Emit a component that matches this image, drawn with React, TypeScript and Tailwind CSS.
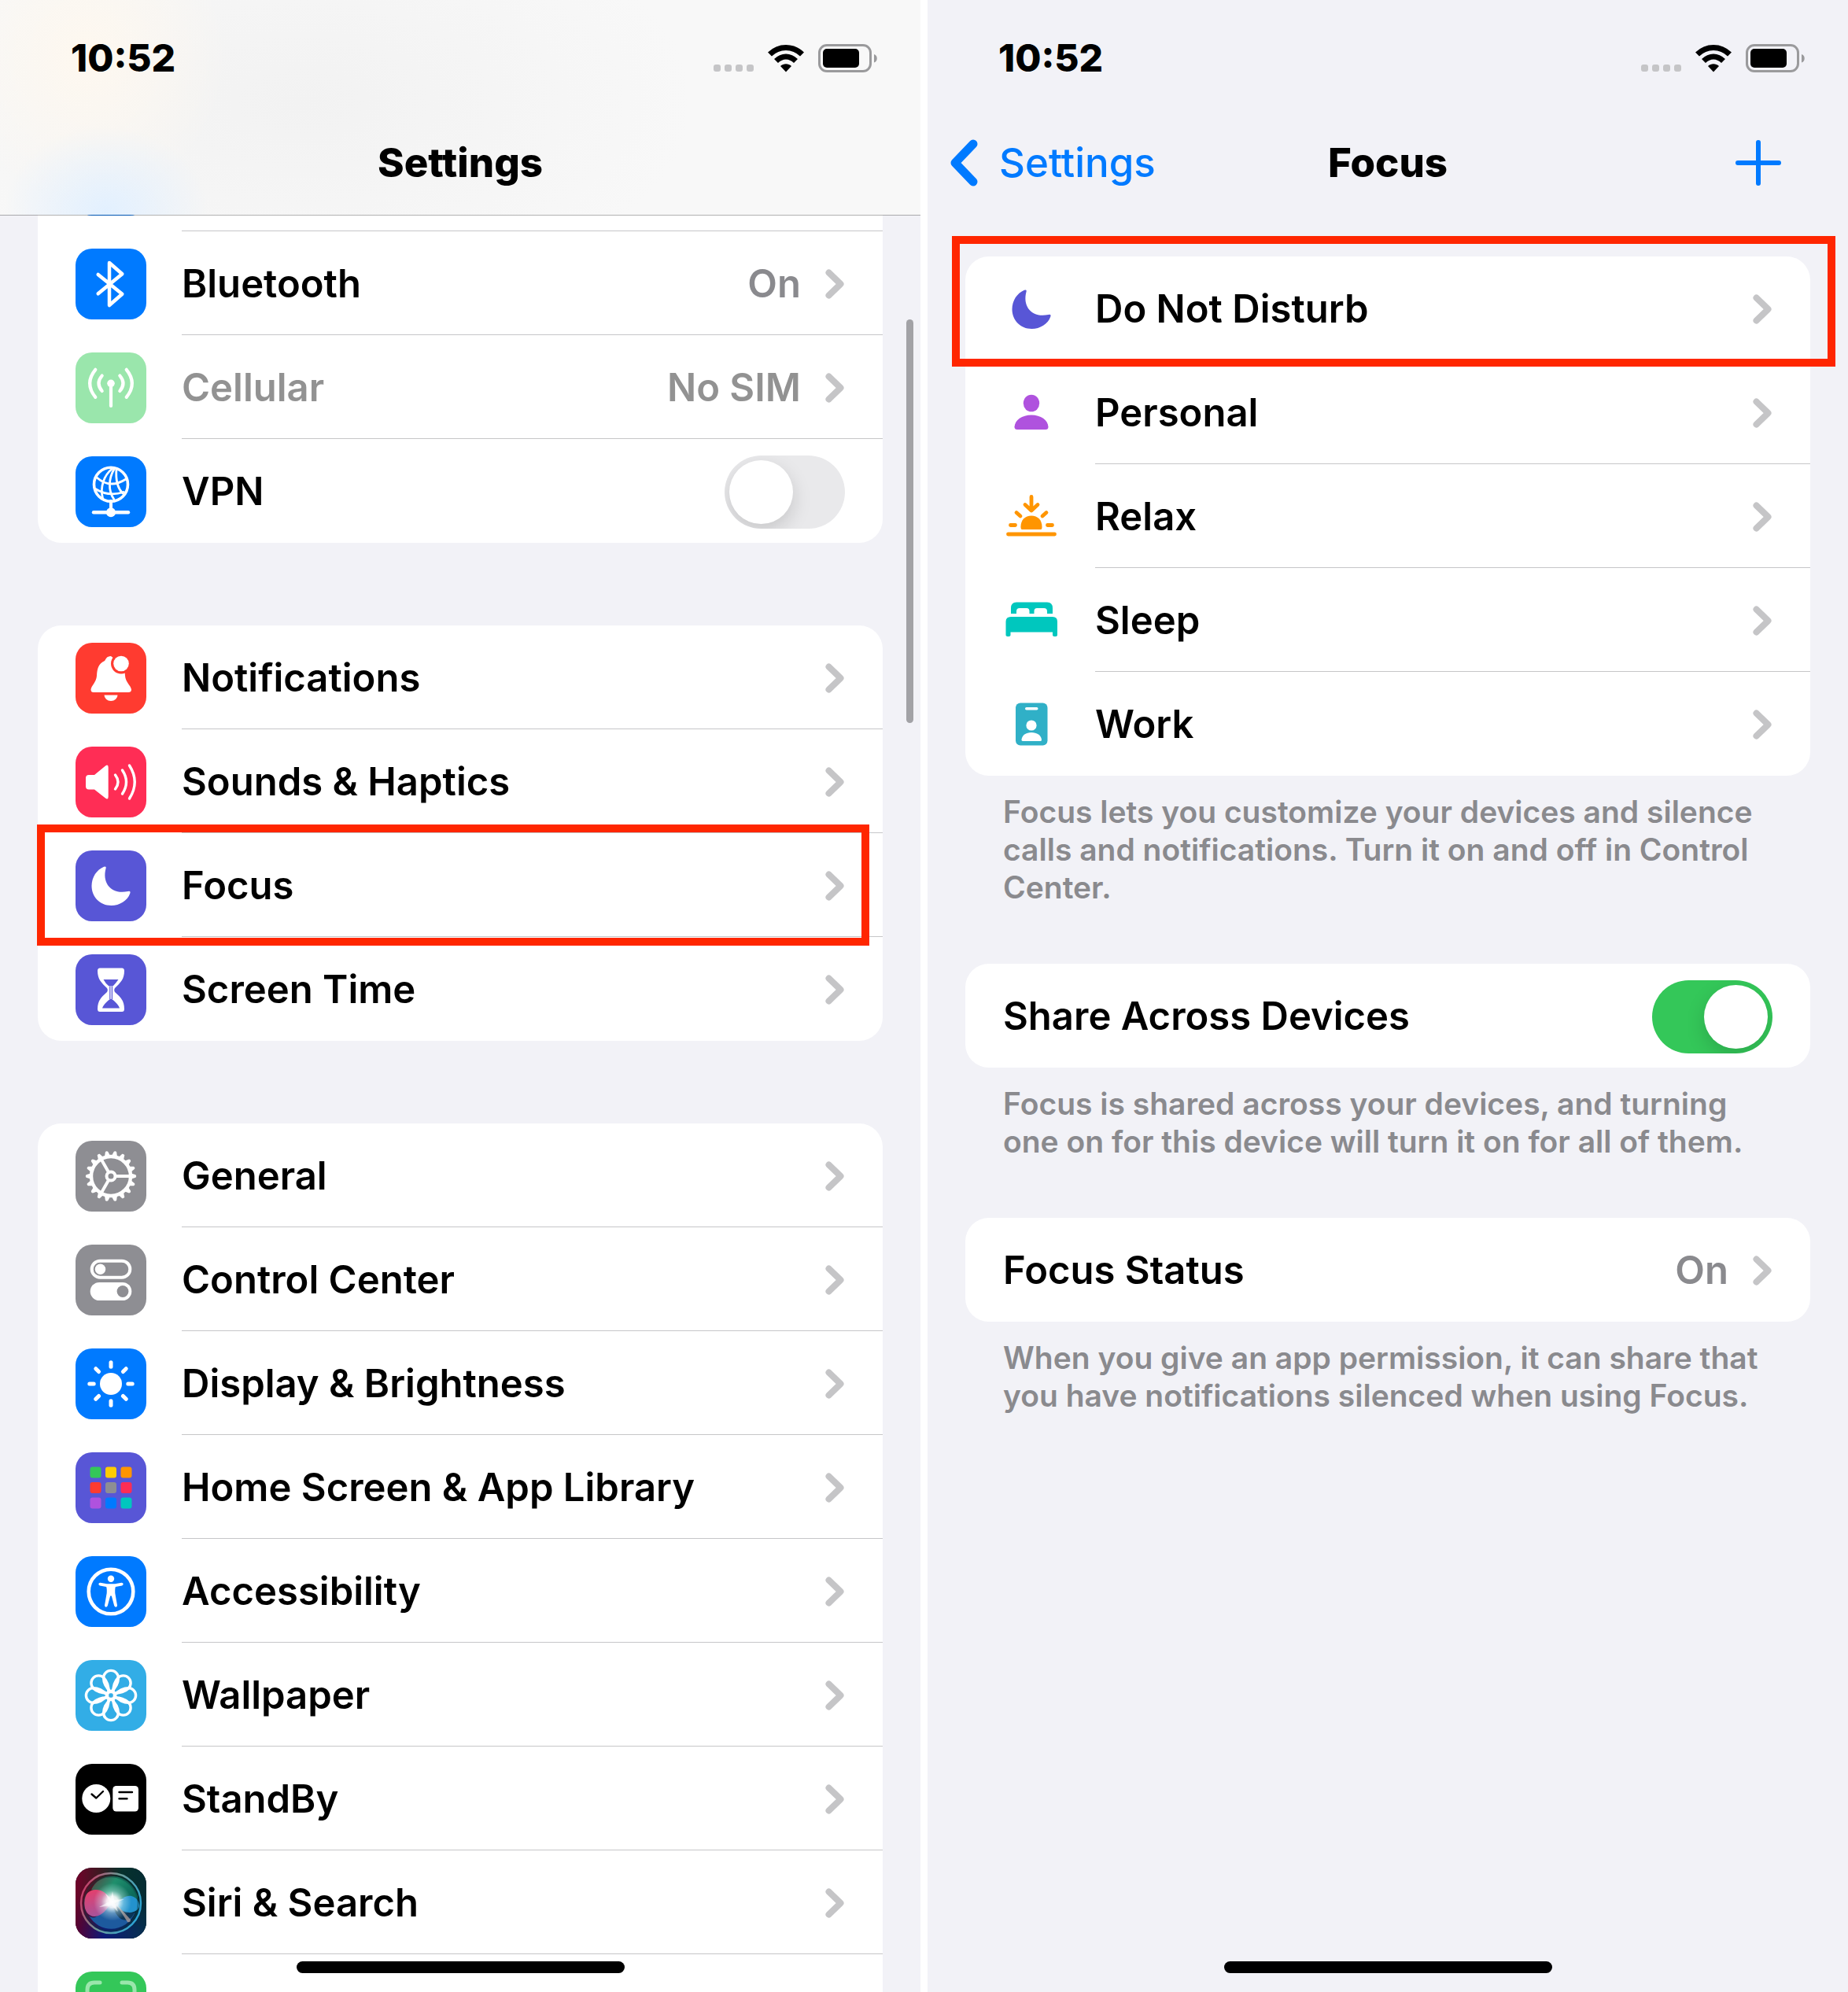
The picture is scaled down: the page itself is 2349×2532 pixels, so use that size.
import React from 'react';
import clsx from 'clsx';

/* ---------- Icons (tiles are drawn on a 90 x 90 grid) ---------- */

interface TileProps {
    className: string;
    children?: React.ReactNode;
}

const Tile: React.FC<TileProps> = ({ className, children }) => (
    <svg viewBox="0 0 90 90" aria-hidden="true" className={clsx('size-[90px] shrink-0 rounded-[21px]', className)}>
        {children}
    </svg>
);

const BluetoothIcon = () => (
    <Tile className="bg-[#007aff]">
        <path
            d="M28.7 33 59.3 57.8 43 72V18L59.3 32.2 28.7 57.3"
            fill="none"
            stroke="#fff"
            strokeWidth="4.5"
            strokeLinecap="round"
            strokeLinejoin="round"
        />
    </Tile>
);

const CellularIcon = () => (
    <Tile className="bg-[#9ae6ac]">
        <circle cx="45" cy="39.3" r="4.8" fill="#fff" />
        <g fill="none" stroke="#fff" strokeWidth="4.2" strokeLinecap="round">
            <path d="M45 40v28" />
            <path d="M56.3 29.5Q64.7 39.3 56.3 49" />
            <path d="M33.7 29.5Q25.3 39.3 33.7 49" />
            <path d="M64.7 21.8Q79 39.3 64.7 56.8" />
            <path d="M25.3 21.8Q11 39.3 25.3 56.8" />
        </g>
    </Tile>
);

const VpnIcon = () => (
    <Tile className="bg-[#007aff]">
        <g fill="none" stroke="#fff" strokeLinecap="round">
            <circle cx="45" cy="35.8" r="21.5" strokeWidth="3.6" />
            <g strokeWidth="2.8">
                <path d="M47 15.5C36 24 31 39 34.5 53" />
                <path d="M49.5 15.5C42 28 41 43 49 55" />
                <path d="M52 16C51 28 52 39 60 47" />
                <path d="M27 27Q44 42 64 29" />
                <path d="M24.5 41Q42 52 61 45.5" />
            </g>
            <path d="M45 57v10" strokeWidth="4" />
            <path d="M23 71.2h44" strokeWidth="4.4" />
        </g>
        <circle cx="45" cy="71.2" r="6" fill="#fff" />
    </Tile>
);

const NotificationsIcon = () => (
    <Tile className="bg-[#ff3b30]">
        <path
            fill="#fff"
            d="M45 17C39.5 17 38.5 21 37 23 29 26.5 27.5 33 27 42 26.5 50 20 54.5 19.5 59.5Q19.5 63 23 63H67Q71 63 71 59.5C70.5 54.5 63.5 50 63 42L62 30Z"
        />
        <path fill="#fff" d="M36.5 66.5H53.5A8.5 7.5 0 0 1 36.5 66.5Z" />
        <circle cx="58" cy="26.5" r="13" fill="#ff3b30" />
        <circle cx="58" cy="26.5" r="9.8" fill="#fff" />
    </Tile>
);

const SoundsIcon = () => (
    <Tile className="bg-[#ff2d55]">
        <path fill="#fff" d="M17 36H24L38 24.5Q41.7 22 41.7 26.5V63.5Q41.7 68 38 65.5L24 54.5H17Q13 54.5 13 50.5V40Q13 36 17 36Z" />
        <g fill="none" stroke="#fff" strokeWidth="3.4" strokeLinecap="round">
            <path d="M50.5 36Q57.5 45 50.5 54" />
            <path d="M59.5 30Q69.5 45 59.5 60" />
            <path d="M68.5 24Q82 45 68.5 66" />
        </g>
    </Tile>
);

const MOON_PATH =
    'M36 20.8Q39.5 19.5 38.5 23C33.5 42 46 56.5 66.5 52Q70.5 51 69.3 54.5C66 64 56 70 45.5 70 31 70 20.5 59 20.5 45 20.5 34 27 24.5 36 20.8Z';

const FocusIcon = () => (
    <Tile className="bg-[#5856d6]">
        <path fill="#fff" d={MOON_PATH} />
    </Tile>
);

const ScreenTimeIcon = () => (
    <Tile className="bg-[#5856d6]">
        <path
            fill="#fff"
            d="M31 17.5H59Q62 17.5 62 21C62 32 57 36 50 43Q48.5 45.5 50 48C57 54 62 59 62 69.5Q62 73 59 73H31Q28 73 28 69.5C28 59 33 54 40 48Q41.5 45.5 40 43C33 36 28 32 28 21Q28 17.5 31 17.5Z"
        />
        <path fill="#5856d6" d="M35.5 32H54.5Q51 37 47.5 40.5H42.5Q38 37 35.5 32Z" />
        <path fill="#5856d6" d="M34 68.5Q35.5 63.5 43 57.5Q45 56 47 57.5 54.5 63.5 56 68.5Z" />
        <path d="M43.8 41v16M46.4 41v16" stroke="#5856d6" strokeWidth="1.2" />
    </Tile>
);

const GeneralIcon = () => (
    <Tile className="bg-[#8e8e93]">
        <g fill="none" stroke="#fff">
            <circle cx="45" cy="45" r="25" strokeWidth="4.4" />
            <circle cx="45" cy="45" r="5.5" strokeWidth="4" />
            {[0, 120, 240].map(angle => (
                <path key={angle} d="M52 45H70" strokeWidth="4" transform={`rotate(${angle} 45 45)`} />
            ))}
        </g>
        {Array.from({ length: 18 }, (_, i) => (
            <path
                key={i}
                fill="#fff"
                d="M71 41.5 76.500 43.3Q78 45 76.5 46.7L71 48.5Z"
                transform={`rotate(${i * 20} 45 45)`}
            />
        ))}
    </Tile>
);

const ControlCenterIcon = () => (
    <Tile className="bg-[#8e8e93]">
        <rect x="20.7" y="20.7" width="48.6" height="21" rx="10.5" fill="none" stroke="#fff" strokeWidth="4" />
        <circle cx="31.5" cy="31.2" r="6.7" fill="#fff" />
        <rect x="18.7" y="48" width="52.6" height="23" rx="11.5" fill="#fff" />
        <circle cx="60" cy="59.5" r="7.4" fill="#8e8e93" />
    </Tile>
);

const DisplayIcon = () => (
    <Tile className="bg-[#007aff]">
        <circle cx="45" cy="45" r="14" fill="#fff" />
        {[0, 45, 90, 135, 180, 225, 270, 315].map(angle => (
            <path
                key={angle}
                d="M45 17.8v5.4"
                stroke="#fff"
                strokeWidth="5"
                strokeLinecap="round"
                transform={`rotate(${angle} 45 45)`}
            />
        ))}
    </Tile>
);

const APP_COLORS = ['#34c759', '#ffcc00', '#ff9500', '#ff3b30', '#8e8e93', '#ff2d55', '#af52de', '#007aff', '#00c7be'];

const HomeScreenIcon = () => (
    <Tile className="bg-[#5856d6]">
        {APP_COLORS.map((color, i) => (
            <rect
                key={color}
                x={18.5 + (i % 3) * 19.5}
                y={18.5 + Math.floor(i / 3) * 19.5}
                width="14"
                height="14"
                rx="3"
                fill={color}
            />
        ))}
    </Tile>
);

const AccessibilityIcon = () => (
    <Tile className="bg-[#007aff]">
        <circle cx="45" cy="45" r="28.3" fill="none" stroke="#fff" strokeWidth="4.6" />
        <circle cx="45" cy="28.8" r="4.2" fill="#fff" />
        <path
            fill="#fff"
            d="M31.5 33.8 40 35.2H50L58.5 33.8Q60.5 33.7 60.7 35.5 60.5 37 59 37.4L51 39Q50 40 50.3 47L53 62.5Q53 64.3 51.5 64.7 49.8 64.7 49.2 63L45.8 50.5H44.2L40.8 63Q40.2 64.7 38.5 64.7 37 64.3 37 62.5L39.7 47Q40 40 39 39L31 37.4Q29.5 37 29.3 35.5 29.5 33.7 31.5 33.8Z"
        />
    </Tile>
);

const WallpaperIcon = () => (
    <Tile className="bg-[#32ade6]">
        <g fill="none" stroke="#fff" strokeWidth="3.4">
            <circle cx="45" cy="45" r="5" />
            {[0, 45, 90, 135, 180, 225, 270, 315].map(angle => (
                <path
                    key={angle}
                    d="M45 40.5C38.5 35.5 35.6 28 35.6 22.8A9.4 9.4 0 0 1 54.4 22.8C54.4 28 51.5 35.5 45 40.5Z"
                    transform={`rotate(${angle} 45 45)`}
                />
            ))}
        </g>
    </Tile>
);

const StandByIcon = () => (
    <Tile className="bg-black">
        <circle cx="26.3" cy="44" r="18" fill="#fff" />
        <rect x="47.3" y="28" width="32.7" height="32.5" rx="4.5" fill="#fff" />
        <g fill="none" stroke="#000" strokeWidth="2.4" strokeLinecap="round" strokeLinejoin="round">
            <path d="M20.5 38.5 26.3 43.5 35 35" />
            <path d="M55.5 36h16.5M55.5 44.2h10" />
        </g>
    </Tile>
);

const SiriIcon = () => (
    <Tile className="bg-[#1c1c2c]">
        <defs>
            <linearGradient id="siriTop" x1="0" x2="1" y1="0" y2="0.1">
                <stop offset="0" stopColor="#74002a" />
                <stop offset="0.35" stopColor="#3c1a22" />
                <stop offset="0.65" stopColor="#06312c" />
                <stop offset="1" stopColor="#052c33" />
            </linearGradient>
            <linearGradient id="siriBottom" x1="0" x2="1" y1="0" y2="0">
                <stop offset="0" stopColor="#5a0030" />
                <stop offset="0.4" stopColor="#0d1b78" />
                <stop offset="1" stopColor="#06314d" />
            </linearGradient>
            <linearGradient id="siriFade" x1="0" x2="0" y1="0" y2="1">
                <stop offset="0.4" stopColor="#000" />
                <stop offset="0.9" stopColor="#fff" />
            </linearGradient>
            <mask id="siriMask">
                <rect width="90" height="90" fill="url(#siriFade)" />
            </mask>
            <linearGradient id="siriRing" x1="0" x2="1" y1="0.3" y2="0.7">
                <stop offset="0" stopColor="#c93a68" />
                <stop offset="0.45" stopColor="#6e9b95" />
                <stop offset="1" stopColor="#27a5d8" />
            </linearGradient>
            <linearGradient id="siriGreen" x1="0" x2="1" y1="0" y2="0.4">
                <stop offset="0" stopColor="#5b3f3f" />
                <stop offset="0.5" stopColor="#1f8f6c" />
                <stop offset="1" stopColor="#0d6b5b" />
            </linearGradient>
            <linearGradient id="siriPink" x1="0.2" x2="0.6" y1="0" y2="1">
                <stop offset="0" stopColor="#e63f6b" />
                <stop offset="1" stopColor="#a2559f" />
            </linearGradient>
            <radialGradient id="siriGlow">
                <stop offset="0" stopColor="#fff" />
                <stop offset="0.3" stopColor="#fff" stopOpacity="0.9" />
                <stop offset="0.6" stopColor="#dff" stopOpacity="0.35" />
                <stop offset="1" stopColor="#dff" stopOpacity="0" />
            </radialGradient>
        </defs>
        <rect width="90" height="90" fill="url(#siriTop)" />
        <rect width="90" height="90" fill="url(#siriBottom)" mask="url(#siriMask)" />
        <path d="M20 28C30 4 68 4 79 36 81 46 60 48 47 43 36 32 24 30 20 28Z" fill="url(#siriGreen)" />
        <path d="M17 61C28 70 34 50 47 44 60 54 74 62 76 56 66 82 32 86 17 61Z" fill="#1d5a9e" />
        <path d="M47 44C60 54 70 60 75 57 68 74 50 68 47 44Z" fill="#0b3557" />
        <path d="M11 45C11 30 22 26 32 29 40 32 43 38 47 43 40 52 34 62 24 62 16 62 11 54 11 45Z" fill="url(#siriPink)" />
        <path d="M50 47C57 40 64 35 71 36 79 38 83 46 80 52 75 58 66 58 60 55Z" fill="#2392cd" />
        <path d="M50 44 70 66Q70 70 66 69Z" fill="#a99a98" opacity="0.8" />
        <circle cx="45" cy="45" r="38" fill="none" stroke="url(#siriRing)" strokeWidth="2.4" />
        <circle cx="45" cy="46" r="34.5" fill="none" stroke="#0b3d3c" strokeWidth="2" opacity="0.4" />
        <circle cx="47" cy="43.5" r="24" fill="url(#siriGlow)" />
        <path d="M47 30 49 41 62 40 50 45 54 56 46 48 30 50 43 43 38 33 45 39Z" fill="#fff" opacity="0.6" />
    </Tile>
);

const FaceIdIcon = () => (
    <Tile className="bg-[#34c759]">
        <g fill="none" stroke="#9ae6ac" strokeWidth="5" strokeLinecap="round">
            <path d="M31 14H24Q15 14 15 23V31" />
            <path d="M59 14H66Q75 14 75 23V31" />
        </g>
    </Tile>
);

/* Plain glyphs used by the Focus modes */

const Glyph: React.FC<{ viewBox?: string; children: React.ReactNode }> = ({ viewBox = '0 0 72 72', children }) => (
    <svg viewBox={viewBox} aria-hidden="true" className="size-[72px] shrink-0">
        {children}
    </svg>
);

const MoonGlyph = () => (
    <Glyph viewBox="9 9 72 72">
        <path fill="#5856d6" d={MOON_PATH} />
    </Glyph>
);

const PersonGlyph = () => (
    <Glyph>
        <ellipse cx="36" cy="23.5" rx="10.2" ry="10.8" fill="#af52de" />
        <path fill="#af52de" d="M18 57Q14.5 57 14.5 53.5C15 45 24 38.5 36 38.5 48 38.5 57 45 57.5 53.5Q57.5 57 54 57Z" />
    </Glyph>
);

const SunsetGlyph = () => (
    <Glyph>
        <g fill="none" stroke="#ff9500" strokeWidth="4.8" strokeLinecap="round" strokeLinejoin="round">
            <path d="M36 10.5V28M28 20.5 36 28 44 20.5" />
            <path d="M17 30.5 22 35M55 30.5 50 35" />
            <path d="M9.5 46.5H15.5M56.5 46.5H62.5" />
            <path d="M6.5 58H65.5" />
        </g>
        <path fill="#ff9500" d="M24 52Q22.5 52 22.5 48.5C22.5 40 28 34.5 36 34.5S49.5 40 49.5 48.5Q49.5 52 48 52Z" />
    </Glyph>
);

const BedGlyph = () => (
    <Glyph>
        <g fill="#00c7be">
            <path d="M10 27V20Q10 12.5 17 12.5H56Q63 12.5 63 20V27H56V24Q56 20 52 20H43Q39.5 20 39.5 24V27H33.5V24Q33.5 20 30 20H21Q17 20 17 24V27Z" />
            <path d="M3.5 54V37Q3.5 31 10 31H63Q69 31 69 37V54Q69 56 66 56T63 54V50.5H9.5V54Q9.5 56 6.5 56T3.5 54Z" />
        </g>
    </Glyph>
);

const BadgeGlyph = () => (
    <Glyph>
        <rect x="16" y="8.500" width="40.5" height="54" rx="6" fill="#30b0c7" />
        <rect x="28" y="14" width="16.5" height="3.5" rx="1.75" fill="#fff" />
        <circle cx="36" cy="37" r="6.6" fill="#fff" />
        <path fill="#fff" d="M25.5 57Q23.5 57 23.5 55.5C24 49.500 29 46 36 46S48.5 49.5 49 55.5Q49 57 47 57Z" />
    </Glyph>
);

const Chevron = () => (
    <svg viewBox="0 0 24 38" fill="none" aria-hidden="true" className="h-[38px] w-6 shrink-0">
        <path d="M4.5 4.5 19.5 19 4.5 33.5" stroke="#c5c5c7" strokeWidth="8" strokeLinecap="round" strokeLinejoin="round" />
    </svg>
);

/* ---------- Shared pieces ---------- */

const StatusBar = () => (
    <div className="flex h-[141px] items-center justify-between pt-1.5 pr-[54px] pl-[90px]">
        <span className="text-[48px] leading-none font-extrabold">10:52</span>
        <svg viewBox="0 0 209 38" fill="none" aria-hidden="true" className="h-[38px] w-[209px]">
            {[0, 14, 28, 42].map(x => (
                <rect key={x} x={x} y="27" width="9" height="9" rx="3" fill="#c5c5c7" />
            ))}
            <path d="M71.5 14C83 2.5 101 2.5 112.5 14" stroke="#000" strokeWidth="7" />
            <path d="M79.5 22.5C87 15 97 15 104.5 22.5" stroke="#000" strokeWidth="7" />
            <path d="M92 36.5 85 29C89 25.2 95 25.2 99 29Z" fill="#000" />
            <rect x="134.5" y="2.5" width="65" height="33" rx="9.5" stroke="#9a9a9c" strokeWidth="3" />
            <rect x="139" y="7" width="46" height="24" rx="5" fill="#000" />
            <path d="M204 14C209 15.5 209 23 204 24.5Z" fill="#9a9a9c" />
        </svg>
    </div>
);

const HomeIndicator = () => (
    <div className="absolute inset-x-0 bottom-6 mx-auto h-[15px] w-[417px] rounded-full bg-black" />
);

const Group: React.FC<{ children: React.ReactNode }> = ({ children }) => (
    <div className="mx-12 flex flex-col rounded-[30px] bg-white">{children}</div>
);

const Footnote: React.FC<{ children: React.ReactNode }> = ({ children }) => (
    <p className="mx-24 mt-[22px] mb-[73px] text-[39px] leading-[48px] font-semibold text-[#8a8a8e]">{children}</p>
);

interface RowProps {
    icon?: React.ReactNode;
    label?: string;
    value?: string;
    disabled?: boolean;
    last?: boolean;
    highlight?: string;
}

const rowText = 'text-[49px] leading-[60px] font-semibold';

const Row: React.FC<RowProps> = ({ icon, label, value, disabled, last, highlight }) => (
    <a
        href="#"
        aria-disabled={disabled}
        className={clsx('relative flex h-[132px] shrink-0 items-center gap-[45px] pt-0.5 pl-12', rowText, disabled && 'text-[#929292]')}
    >
        {icon}
        <span
            className={clsx(
                'flex h-full flex-1 items-center justify-between border-b pr-[49px]',
                last ? 'border-transparent' : 'border-[#c6c6c8]'
            )}
        >
            <span>{label}</span>
            <span className={clsx('flex items-center gap-[31px]', !disabled && 'text-[#8a8a8e]')}>
                {value}
                {label && <Chevron />}
            </span>
        </span>
        {highlight && <span className={clsx('pointer-events-none absolute z-10 border-10 border-[#ff2600]', highlight)} />}
    </a>
);

interface SwitchRowProps {
    icon?: React.ReactNode;
    label: string;
    on?: boolean;
}

const SwitchRow: React.FC<SwitchRowProps> = ({ icon, label, on }) => (
    <label className={clsx('flex h-[132px] shrink-0 items-center gap-[45px] px-12 pt-0.5', rowText)}>
        {icon}
        <span className="flex-1">{label}</span>
        <input
            type="checkbox"
            role="switch"
            defaultChecked={on}
            className="flex h-[93px] w-[153px] appearance-none items-center overflow-hidden rounded-full bg-[#e9e9eb] px-1.5 before:size-[81px] before:rounded-full before:bg-white before:shadow-[0_9px_24px_rgba(0,0,0,0.15)] checked:justify-end checked:bg-[#34c759]"
        />
    </label>
);

/* ---------- Screens ---------- */

const SettingsScreen = () => (
    <section className="relative flex h-screen flex-1 flex-col overflow-hidden bg-[#f2f2f7]">
        <header className="relative z-10 shrink-0 border-b border-black/30 bg-[#f8f8f8] bg-[radial-gradient(130px_110px_at_135px_270px,#e2f0ff,transparent),radial-gradient(180px_190px_at_110px_70px,#fef8ef,transparent),radial-gradient(500px_260px_at_380px_130px,#f2f2f2,transparent)] bg-clip-padding">
            <StatusBar />
            <div className="flex h-[132px] items-center justify-center">
                <h1 className="text-[51px] leading-[60px] font-extrabold">Settings</h1>
            </div>
        </header>

        <main className="-mt-28 flex flex-col gap-[105px]">
            <Group>
                <Row icon={<Tile className="bg-[#007aff]" />} />
                <Row icon={<BluetoothIcon />} label="Bluetooth" value="On" />
                <Row icon={<CellularIcon />} label="Cellular" value="No SIM" disabled />
                <SwitchRow icon={<VpnIcon />} label="VPN" />
            </Group>
            <Group>
                <Row icon={<NotificationsIcon />} label="Notifications" />
                <Row icon={<SoundsIcon />} label="Sounds & Haptics" />
                <Row icon={<FocusIcon />} label="Focus" highlight="-inset-y-[11px] -left-px right-[17px]" />
                <Row icon={<ScreenTimeIcon />} label="Screen Time" last />
            </Group>
            <Group>
                <Row icon={<GeneralIcon />} label="General" />
                <Row icon={<ControlCenterIcon />} label="Control Center" />
                <Row icon={<DisplayIcon />} label="Display & Brightness" />
                <Row icon={<HomeScreenIcon />} label="Home Screen & App Library" />
                <Row icon={<AccessibilityIcon />} label="Accessibility" />
                <Row icon={<WallpaperIcon />} label="Wallpaper" />
                <Row icon={<StandByIcon />} label="StandBy" />
                <Row icon={<SiriIcon />} label="Siri & Search" />
                <Row icon={<FaceIdIcon />} />
            </Group>
        </main>

        <div className="absolute top-[406px] right-[9px] h-[513px] w-[9px] rounded-full bg-[#a2a2a6]" />
        <HomeIndicator />
    </section>
);

const FocusScreen = () => (
    <section className="relative h-screen flex-1 overflow-hidden bg-[#f2f2f7]">
        <header className="mb-[53px]">
            <StatusBar />
            <div className="grid h-[132px] grid-cols-[1fr_auto_1fr] items-center px-7">
                <a href="#" className="flex items-center gap-[27px] text-[51px] leading-[60px] font-medium text-[#007aff]">
                    <svg viewBox="0 0 36 60" fill="none" aria-hidden="true" className="h-[60px] w-9">
                        <path d="M30 6 7 30 30 54" stroke="currentColor" strokeWidth="11" strokeLinecap="round" strokeLinejoin="round" />
                    </svg>
                    Settings
                </a>
                <h1 className="text-[51px] leading-[60px] font-extrabold">Focus</h1>
                <button type="button" aria-label="Add Focus" className="mr-14 justify-self-end text-[#007aff]">
                    <svg viewBox="0 0 60 60" fill="none" aria-hidden="true" className="size-[60px]">
                        <path d="M30 4v52M4 30h52" stroke="currentColor" strokeWidth="6" strokeLinecap="round" />
                    </svg>
                </button>
            </div>
        </header>

        <main>
            <Group>
                <Row icon={<MoonGlyph />} label="Do Not Disturb" highlight="-top-[26px] -right-8 -bottom-2 -left-[17px]" />
                <Row icon={<PersonGlyph />} label="Personal" />
                <Row icon={<SunsetGlyph />} label="Relax" />
                <Row icon={<BedGlyph />} label="Sleep" />
                <Row icon={<BadgeGlyph />} label="Work" last />
            </Group>
            <Footnote>
                Focus lets you customize your devices and silence calls and notifications. Turn it on and off in Control Center.
            </Footnote>

            <Group>
                <SwitchRow label="Share Across Devices" on />
            </Group>
            <Footnote>
                Focus is shared across your devices, and turning one on for this device will turn it on for all of them.
            </Footnote>

            <Group>
                <Row label="Focus Status" value="On" last />
            </Group>
            <Footnote>
                When you give an app permission, it can share that you have notifications silenced when using Focus.
            </Footnote>
        </main>

        <HomeIndicator />
    </section>
);

const App = () => (
    <div className="flex gap-[9px] bg-white font-['Inter',sans-serif] text-black">
        <SettingsScreen />
        <FocusScreen />
    </div>
);

export default App;
